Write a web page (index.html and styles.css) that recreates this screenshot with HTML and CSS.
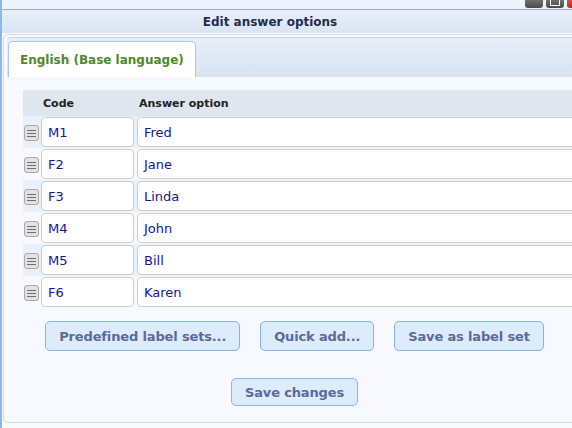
FILE: index.html
```html
<!DOCTYPE html>
<html>
<head>
<meta charset="utf-8">
<link rel="stylesheet" href="styles.css">
</head>
<body>
<div class="topbar">
  <div class="winbtns">
    <span class="wb wb-min"></span>
    <span class="wb wb-max"><span class="wb-box"></span></span>
    <span class="wb wb-close"></span>
  </div>
</div>
<div class="titlebar">Edit answer options</div>
<div class="panel">
  <div class="tabnav">
    <div class="tab">English (Base language)</div>
  </div>
  <div class="tabbody">
    <div class="answers">
      <div class="head">
        <span></span>
        <span class="hcell">Code</span>
        <span class="hcell">Answer option</span>
      </div>
      <div class="row odd">
        <span class="handle"><svg width="15" height="16" viewBox="0 0 15 16"><rect x="0.5" y="0.5" width="14" height="15" rx="2.5" fill="#e2e2e2" stroke="#a9a9a9"/><path d="M3 5.5h9M3 8.5h9M3 11.5h9" stroke="#6e6e6e" stroke-width="1"/></svg></span>
        <span class="cell"><span class="input code">M1</span></span>
        <span class="cell"><span class="input answer">Fred</span></span>
      </div>
      <div class="row">
        <span class="handle"><svg width="15" height="16" viewBox="0 0 15 16"><rect x="0.5" y="0.5" width="14" height="15" rx="2.5" fill="#e2e2e2" stroke="#a9a9a9"/><path d="M3 5.5h9M3 8.5h9M3 11.5h9" stroke="#6e6e6e" stroke-width="1"/></svg></span>
        <span class="cell"><span class="input code">F2</span></span>
        <span class="cell"><span class="input answer">Jane</span></span>
      </div>
      <div class="row odd">
        <span class="handle"><svg width="15" height="16" viewBox="0 0 15 16"><rect x="0.5" y="0.5" width="14" height="15" rx="2.5" fill="#e2e2e2" stroke="#a9a9a9"/><path d="M3 5.5h9M3 8.5h9M3 11.5h9" stroke="#6e6e6e" stroke-width="1"/></svg></span>
        <span class="cell"><span class="input code">F3</span></span>
        <span class="cell"><span class="input answer">Linda</span></span>
      </div>
      <div class="row">
        <span class="handle"><svg width="15" height="16" viewBox="0 0 15 16"><rect x="0.5" y="0.5" width="14" height="15" rx="2.5" fill="#e2e2e2" stroke="#a9a9a9"/><path d="M3 5.5h9M3 8.5h9M3 11.5h9" stroke="#6e6e6e" stroke-width="1"/></svg></span>
        <span class="cell"><span class="input code">M4</span></span>
        <span class="cell"><span class="input answer">John</span></span>
      </div>
      <div class="row odd">
        <span class="handle"><svg width="15" height="16" viewBox="0 0 15 16"><rect x="0.5" y="0.5" width="14" height="15" rx="2.5" fill="#e2e2e2" stroke="#a9a9a9"/><path d="M3 5.5h9M3 8.5h9M3 11.5h9" stroke="#6e6e6e" stroke-width="1"/></svg></span>
        <span class="cell"><span class="input code">M5</span></span>
        <span class="cell"><span class="input answer">Bill</span></span>
      </div>
      <div class="row">
        <span class="handle"><svg width="15" height="16" viewBox="0 0 15 16"><rect x="0.5" y="0.5" width="14" height="15" rx="2.5" fill="#e2e2e2" stroke="#a9a9a9"/><path d="M3 5.5h9M3 8.5h9M3 11.5h9" stroke="#6e6e6e" stroke-width="1"/></svg></span>
        <span class="cell"><span class="input code">F6</span></span>
        <span class="cell"><span class="input answer">Karen</span></span>
      </div>
    </div>
    <div class="actions">
      <button class="btn">Predefined label sets...</button>
      <button class="btn">Quick add...</button>
      <button class="btn">Save as label set</button>
    </div>
    <div class="actions save">
      <button class="btn btn-save">Save changes</button>
    </div>
  </div>
</div>
</body>
</html>
```

FILE: styles.css
```css
html, body {
  margin: 0;
  padding: 0;
  height: 100%;
  overflow: hidden;
}
body {
  background: #f7f9fe;
  border-left: 2px solid #8db8e4;
  font-family: "DejaVu Sans", Verdana, sans-serif;
}
.topbar {
  height: 9px;
  background: #eef4fc;
  border-bottom: 1px solid #9aa9c2;
  display: flex;
  justify-content: flex-end;
  overflow: hidden;
}
.winbtns {
  display: flex;
  gap: 3px;
  margin-right: -13px;
}
.wb {
  width: 18px;
  height: 8px;
  border-radius: 0 0 3px 3px;
  background: linear-gradient(#707070, #4a4a4a);
  display: flex;
  justify-content: center;
  align-items: flex-end;
}
.wb-box {
  width: 8px;
  height: 5px;
  border: 1px solid #fff;
  border-top: none;
  margin-bottom: 2px;
}
.wb-close {
  background: linear-gradient(#e2502c, #c22a10);
}
.titlebar {
  height: 23px;
  display: flex;
  align-items: center;
  justify-content: center;
  padding-right: 34px;
  background: linear-gradient(#e9eff9, #d9e4f2);
  font-weight: bold;
  font-size: 12px;
  color: #1f2d4e;
}
.panel {
  margin: 1px -18px 0 1px;
  border: 1px solid #cfdcee;
  border-radius: 5px;
  background: #f7f9fe;
}
.tabnav {
  margin: 2px 0 0 3px;
  height: 39px;
  border-top: 1px solid #c9d6e8;
  border-radius: 4px 0 0 0;
  background: linear-gradient(#e8eef8, #d8e3f2);
  padding-left: 1px;
  display: flex;
  align-items: flex-end;
}
.tab {
  height: 35px;
  padding: 0 11px;
  white-space: nowrap;
  display: flex;
  align-items: center;
  justify-content: center;
  background: #fff;
  border: 1px solid #a9c9ea;
  border-bottom: none;
  border-radius: 5px 5px 0 0;
  font-weight: bold;
  font-size: 12px;
  color: #4d8a2a;
}
.tabbody {
  padding: 13px 0 16px 19px;
  overflow: hidden;
}
.answers {
  display: flex;
  flex-direction: column;
}
.head, .row {
  display: grid;
  grid-template-columns: 18px 96px 1fr;
}
.head {
  height: 26px;
  align-items: center;
  background: #dfe6ee;
}
.hcell {
  padding-left: 2px;
  font-weight: bold;
  font-size: 11px;
  color: #222;
}
.row {
  height: 32px;
}
.row.odd {
  background: #e8f0fc;
}
.handle {
  padding: 9px 0 0 1px;
  line-height: 0;
}
.cell {
  padding-top: 1px;
}
.input {
  box-sizing: border-box;
  height: 30px;
  display: flex;
  align-items: center;
  padding: 1px 0 0 6px;
  background: #fff;
  border: 1px solid #cdcdcd;
  border-radius: 4px;
  font-size: 13px;
  color: #16168f;
}
.input.code {
  width: 93px;
}
.actions {
  display: flex;
  justify-content: center;
  gap: 20px;
  margin: 13px 23px 0 0;
}
.actions.save {
  margin-top: 27px;
}
.btn {
  height: 30px;
  padding: 0 13px;
  background: #dcecfb;
  border: 1px solid #82b9e8;
  border-radius: 5px;
  font-family: "DejaVu Sans", Verdana, sans-serif;
  font-weight: bold;
  font-size: 13px;
  color: #5a6b9b;
  letter-spacing: -0.15px;
}
.btn-save {
  height: 28px;
}
```
